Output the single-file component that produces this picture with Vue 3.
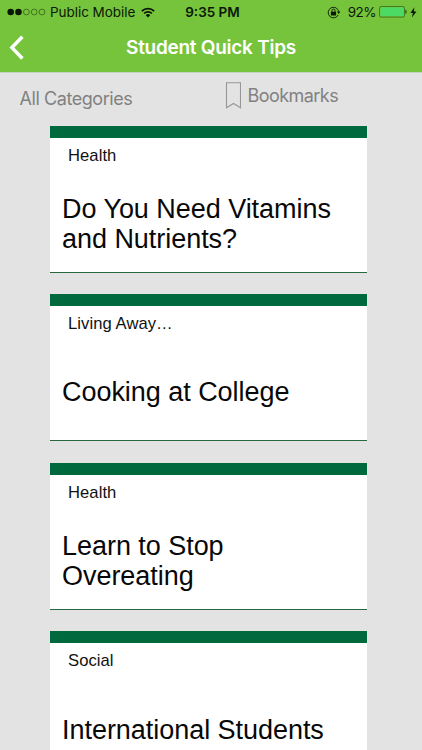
<script setup>
const tips = [
  { category: 'Health', title: 'Do You Need Vitamins and Nutrients?' },
  { category: 'Living Away…', title: 'Cooking at College' },
  { category: 'Health', title: 'Learn to Stop Overeating' },
  { category: 'Social', title: 'International Students' },
]
</script>

<template>
  <div class="screen">
    <header class="top">
      <div class="status">
        <div class="left">
          <svg class="dots" width="39" height="8" viewBox="0 0 39 8">
            <circle cx="3.7" cy="4" r="3.3" fill="#0b1704" />
            <circle cx="11.5" cy="4" r="3.3" fill="#0b1704" />
            <g fill="none" stroke="#2c5212" stroke-width=".7">
              <circle cx="19.4" cy="4" r="2.9" />
              <circle cx="27.2" cy="4" r="2.9" />
              <circle cx="35" cy="4" r="2.9" />
            </g>
          </svg>
          <span class="carrier">Public Mobile</span>
          <svg class="wifi" width="14" height="11" viewBox="0 0 14 11">
            <g fill="none" stroke="#0b1704" stroke-width="1.7">
              <path d="M.8 4.1a8.8 8.8 0 0 1 12.4 0" />
              <path d="M3.1 6.5a5.5 5.5 0 0 1 7.8 0" />
            </g>
            <path d="M7 10.5 4.8 8.2a3.1 3.1 0 0 1 4.4 0z" fill="#0b1704" />
          </svg>
        </div>
        <span class="time">9:35 PM</span>
        <div class="right">
          <svg class="lock" width="14" height="13" viewBox="0 0 14 13">
            <path d="M11.2 9A5.3 5.3 0 1 1 11.7 5.6" fill="none" stroke="#0b1704" stroke-width=".9" />
            <path d="M9.9 5.6h3.5l-1.7 2.3z" fill="#0b1704" />
            <rect x="3.9" y="5.7" width="5.2" height="3.9" rx=".4" fill="#0b1704" />
            <path d="M5 6V4.6a1.5 1.5 0 0 1 3 0V6" fill="none" stroke="#0b1704" stroke-width=".9" />
          </svg>
          <span class="percent">92%</span>
          <svg class="battery" width="28" height="12" viewBox="0 0 28 12">
            <rect x=".5" y=".5" width="25" height="10.6" rx="1.6" fill="#73c53a" stroke="#376a1c" stroke-width=".8" />
            <rect x="1.5" y="1.5" width="23" height="8.6" rx=".6" fill="#4cd964" />
            <path d="M26.4 3.8c1.5.4 1.5 3.6 0 4z" fill="#1c380d" />
          </svg>
          <svg class="bolt" width="7" height="11" viewBox="0 0 7 11">
            <path d="M4.4.3.4 6h2.5l-1 4.6L6.5 4.5H3.8z" fill="#0b1704" />
          </svg>
        </div>
      </div>
      <div class="nav">
        <svg class="back" width="16" height="26" viewBox="0 0 16 26">
          <path d="M13.4 1.7 2.9 12.6l10.5 10.9" fill="none" stroke="#fff" stroke-width="3.5" />
        </svg>
        <h1>Student Quick Tips</h1>
      </div>
    </header>

    <div class="filters">
      <span class="all">All Categories</span>
      <div class="bookmarks">
        <svg width="16" height="27" viewBox="0 0 16 27">
          <path d="M1.5.8h14v24.9l-7-4.2-7 4.2z" fill="none" stroke="#969696" stroke-width="1.1" />
        </svg>
        <span>Bookmarks</span>
      </div>
    </div>

    <main class="list">
      <article v-for="tip in tips" :key="tip.title" class="card">
        <p class="category">{{ tip.category }}</p>
        <h2>{{ tip.title }}</h2>
      </article>
    </main>
  </div>
</template>

<style>
body {
  overflow: hidden;
}
</style>

<style scoped>
.screen {
  display: flex;
  flex-direction: column;
  width: 422px;
  height: 750px;
  overflow: hidden;
  background: #e3e3e3;
  font-family: Inter, "Liberation Sans", sans-serif;
}

.top {
  flex: none;
  height: 72px;
  background: #76c43c;
  border-bottom: 1px solid #c8d3bf;
  box-sizing: content-box;
}

.status {
  display: grid;
  grid-template-columns: 1fr auto 1fr;
  height: 24px;
  align-items: center;
  color: #0b1704;
  font-size: 13.5px;
  line-height: 24px;
}

.left,
.right {
  display: flex;
  align-items: center;
}

.left {
  padding-left: 7px;
}

.carrier {
  width: 85px;
  margin-left: 4px;
  letter-spacing: -0.05px;
  white-space: nowrap;
}

.wifi {
  margin-left: 6px;
}

.time {
  padding-left: 3px;
  font-weight: 600;
}

.right {
  justify-content: flex-end;
  padding-right: 5px;
}

.percent {
  margin-left: 7px;
  letter-spacing: -0.5px;
}

.battery {
  margin-left: 3px;
}

.bolt {
  margin-left: 3px;
}

.nav {
  display: grid;
  grid-template-columns: 26px 1fr 26px;
  height: 48px;
  align-items: center;
}

.back {
  margin-left: 9px;
}

h1 {
  margin: 0;
  color: #fff;
  font-size: 19px;
  font-weight: 600;
  letter-spacing: -0.27px;
  line-height: 48px;
  text-align: center;
}

.filters {
  display: flex;
  flex: none;
  height: 52.6px;
  color: #818181;
  font-size: 18px;
  line-height: 22px;
}

.all {
  width: 205px;
  padding: 15px 0 0 19.5px;
  box-sizing: border-box;
  letter-spacing: -0.43px;
  white-space: nowrap;
}

.bookmarks {
  display: flex;
  align-items: flex-start;
  padding: 9px 0 0 20px;
}

.bookmarks span {
  margin: 3px 0 0 6.5px;
  letter-spacing: -0.55px;
}

.list {
  display: flex;
  flex-direction: column;
  gap: 21.6px;
  padding: 0 55.5px 0 50px;
  color: #111;
  font-family: "Liberation Sans", Arial, sans-serif;
}

.card {
  display: flex;
  flex: none;
  flex-direction: column;
  height: 147px;
  box-sizing: border-box;
  border-top: 12px solid #00693e;
  border-bottom: 1px solid #28683f;
  background: #fff;
}

.category {
  margin: 8px 0 0 18px;
  font-size: 16.6px;
  letter-spacing: 0.07px;
  line-height: 20px;
}

h2 {
  display: flex;
  flex: none;
  height: 116.6px;
  align-items: center;
  margin: 0 12px;
  color: #080808;
  font-size: 27px;
  font-weight: 400;
  letter-spacing: -0.04px;
  line-height: 30px;
}
</style>
